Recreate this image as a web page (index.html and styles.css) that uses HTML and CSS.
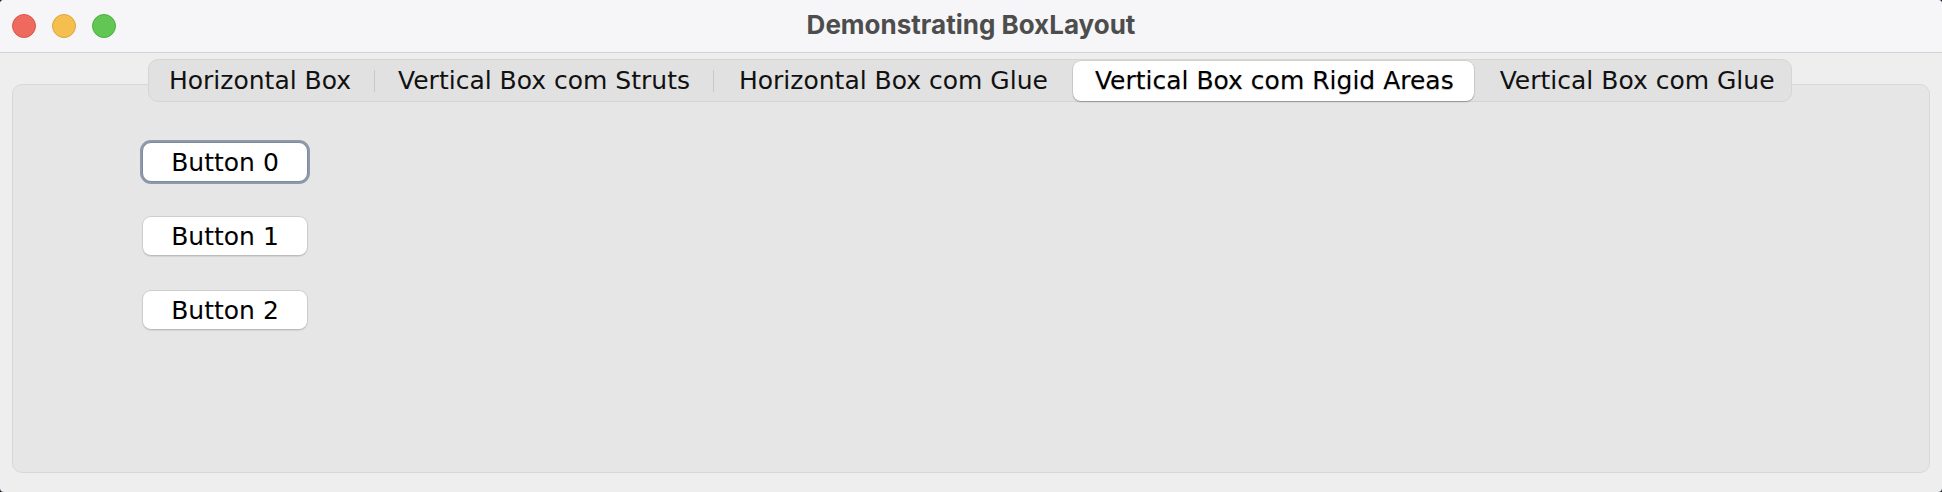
FILE: index.html
```html
<!DOCTYPE html>
<html>
<head>
<meta charset="utf-8">
<title>Demonstrating BoxLayout</title>
<link rel="stylesheet" href="styles.css">
</head>
<body>
<div class="window">
  <header class="titlebar">
    <div class="lights">
      <span class="light red"></span>
      <span class="light yellow"></span>
      <span class="light green"></span>
    </div>
    <div class="title">Demonstrating BoxLayout</div>
    <div class="spacer"></div>
  </header>
  <main class="content">
    <nav class="tabbar">
      <div class="tab first">Horizontal Box</div>
      <span class="sep"></span>
      <div class="tab">Vertical Box com Struts</div>
      <span class="sep"></span>
      <div class="tab third">Horizontal Box com Glue</div>
      <div class="tab selected">Vertical Box com Rigid Areas</div>
      <div class="tab last">Vertical Box com Glue</div>
    </nav>
    <section class="panel">
      <div class="buttons">
        <button class="btn focused">Button 0</button>
        <button class="btn">Button 1</button>
        <button class="btn">Button 2</button>
      </div>
    </section>
  </main>
</div>
</body>
</html>
```

FILE: styles.css
```css
html, body {
  margin: 0;
  padding: 0;
  width: 1942px;
  height: 492px;
  overflow: hidden;
  background: #1f2432;
}

.window {
  width: 1942px;
  height: 492px;
  background: #eeeeee;
  display: flex;
  flex-direction: column;
  border-radius: 4px;
  overflow: hidden;
}

.titlebar {
  height: 52px;
  flex: none;
  background: #f6f6f8;
  border-bottom: 1px solid #d2d2d4;
  display: grid;
  grid-template-columns: 1fr auto 1fr;
  align-items: center;
}

.lights {
  display: flex;
  gap: 16px;
  padding-left: 12px;
}

.light {
  width: 24px;
  height: 24px;
  border-radius: 50%;
  box-sizing: border-box;
  display: block;
}

.red { background: #ee6a5f; border: 1px solid #d9564c; }
.yellow { background: #f5bf4f; border: 1px solid #dca63a; }
.green { background: #62c655; border: 1px solid #4fae43; }

.title {
  font-family: "Inter", "Liberation Sans", sans-serif;
  font-weight: 700;
  font-size: 26px;
  color: #4d4d4d;
  padding-bottom: 4px;
}

.content {
  flex: 1;
  display: flex;
  flex-direction: column;
  padding: 6px 12px 19px;
}

.tabbar {
  align-self: flex-start;
  margin-left: 136px;
  height: 43px;
  box-sizing: border-box;
  border: 1px solid #d5d5d5;
  background: #e1e1e1;
  border-radius: 10px;
  display: flex;
  align-items: center;
  padding: 0 1px;
  position: relative;
  z-index: 1;
}

.tab {
  height: 40px;
  display: flex;
  align-items: center;
  padding: 0 23px;
  font-family: "DejaVu Sans", sans-serif;
  font-size: 25px;
  color: #111111;
  white-space: nowrap;
}

.tab.first {
  padding: 0 23px 0 19px;
}

.tab.third {
  padding: 0 25px;
}

.tab.selected {
  padding: 0 20px 0 22px;
  background: #ffffff;
  border-radius: 8px;
  color: #000000;
  box-shadow: 0 1px 1.5px rgba(0, 0, 0, 0.28), 0 0 0 0.5px rgba(0, 0, 0, 0.12);
  text-shadow: 0 1px 1px rgba(0, 0, 0, 0.25);
}

.tab.last {
  padding: 0 15px 0 26px;
}

.sep {
  width: 1px;
  height: 22px;
  background: #c9c9c9;
  flex: none;
}

.panel {
  flex: 1;
  margin-top: -18px;
  background: #e6e6e6;
  border: 1px solid #d8d8d8;
  border-radius: 10px;
  padding: 57px 0 0 129px;
}

.buttons {
  display: flex;
  flex-direction: column;
  gap: 34px;
  align-items: flex-start;
}

.btn {
  width: 166px;
  height: 40px;
  box-sizing: border-box;
  background: #ffffff;
  border: 1px solid #cdcdcd;
  border-bottom-color: #bdbdbd;
  border-radius: 9px;
  font-family: "DejaVu Sans", sans-serif;
  font-size: 25px;
  color: #000000;
  padding: 0;
  margin: 0;
  box-shadow: 0 1px 1px rgba(0, 0, 0, 0.08);
}

.btn.focused {
  border-color: #7f899c;
  box-shadow: 0 0 0 2px #8f99ab;
}
```
